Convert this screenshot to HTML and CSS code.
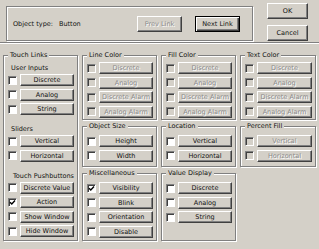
FILE: index.html
```html
<!DOCTYPE html>
<html lang="en">
<head>
    <meta charset="UTF-8">
    <title>Animation Links</title>
    <link rel="stylesheet" href="styles.css">
</head>
<body>
    <div class="dialog">
        <!-- Cabecera: tipo de objeto y navegación -->
        <div class="top">
            <div class="info">
                <span class="info-label">Object type:</span>
                <span class="info-value">Button</span>
                <button class="btn btn-link btn-prev" disabled>Prev Link</button>
                <button class="btn btn-link btn-default">Next Link</button>
            </div>
            <div class="actions">
                <button class="btn btn-action">OK</button>
                <button class="btn btn-action">Cancel</button>
            </div>
        </div>
        <div class="separator"></div>

        <div class="groups">
            <fieldset class="group group-touch">
                <legend>Touch Links</legend>
                <div class="sub">User Inputs</div>
                <div class="rows">
                    <div class="row"><span class="check"></span><button class="btn">Discrete</button></div>
                    <div class="row"><span class="check"></span><button class="btn">Analog</button></div>
                    <div class="row"><span class="check"></span><button class="btn">String</button></div>
                </div>
                <div class="sub">Sliders</div>
                <div class="rows">
                    <div class="row"><span class="check"></span><button class="btn">Vertical</button></div>
                    <div class="row"><span class="check"></span><button class="btn">Horizontal</button></div>
                </div>
                <div class="sub sub-center">Touch Pushbuttons</div>
                <div class="rows">
                    <div class="row"><span class="check"></span><button class="btn">Discrete Value</button></div>
                    <div class="row"><span class="check checked"><svg viewBox="0 0 7 7"><path d="M1 3.2 L2.8 5 L6 1.6"/></svg></span><button class="btn">Action</button></div>
                    <div class="row"><span class="check"></span><button class="btn">Show Window</button></div>
                    <div class="row"><span class="check"></span><button class="btn">Hide Window</button></div>
                </div>
            </fieldset>

            <fieldset class="group group-off">
                <legend>Line Color</legend>
                <div class="rows">
                    <div class="row"><span class="check"></span><button class="btn" disabled>Discrete</button></div>
                    <div class="row"><span class="check"></span><button class="btn" disabled>Analog</button></div>
                    <div class="row"><span class="check"></span><button class="btn" disabled>Discrete Alarm</button></div>
                    <div class="row"><span class="check"></span><button class="btn" disabled>Analog Alarm</button></div>
                </div>
            </fieldset>

            <fieldset class="group group-off">
                <legend>Fill Color</legend>
                <div class="rows">
                    <div class="row"><span class="check"></span><button class="btn" disabled>Discrete</button></div>
                    <div class="row"><span class="check"></span><button class="btn" disabled>Analog</button></div>
                    <div class="row"><span class="check"></span><button class="btn" disabled>Discrete Alarm</button></div>
                    <div class="row"><span class="check"></span><button class="btn" disabled>Analog Alarm</button></div>
                </div>
            </fieldset>

            <fieldset class="group group-off">
                <legend>Text Color</legend>
                <div class="rows">
                    <div class="row"><span class="check"></span><button class="btn" disabled>Discrete</button></div>
                    <div class="row"><span class="check"></span><button class="btn" disabled>Analog</button></div>
                    <div class="row"><span class="check"></span><button class="btn" disabled>Discrete Alarm</button></div>
                    <div class="row"><span class="check"></span><button class="btn" disabled>Analog Alarm</button></div>
                </div>
            </fieldset>

            <fieldset class="group group-mid">
                <legend>Object Size</legend>
                <div class="rows">
                    <div class="row"><span class="check"></span><button class="btn">Height</button></div>
                    <div class="row"><span class="check"></span><button class="btn">Width</button></div>
                </div>
            </fieldset>

            <fieldset class="group group-mid">
                <legend>Location</legend>
                <div class="rows">
                    <div class="row"><span class="check"></span><button class="btn">Vertical</button></div>
                    <div class="row"><span class="check"></span><button class="btn">Horizontal</button></div>
                </div>
            </fieldset>

            <fieldset class="group group-mid group-off">
                <legend>Percent Fill</legend>
                <div class="rows">
                    <div class="row"><span class="check"></span><button class="btn" disabled>Vertical</button></div>
                    <div class="row"><span class="check"></span><button class="btn" disabled>Horizontal</button></div>
                </div>
            </fieldset>

            <fieldset class="group group-low">
                <legend>Miscellaneous</legend>
                <div class="rows">
                    <div class="row"><span class="check checked"><svg viewBox="0 0 7 7"><path d="M1 3.2 L2.8 5 L6 1.6"/></svg></span><button class="btn">Visibility</button></div>
                    <div class="row"><span class="check"></span><button class="btn">Blink</button></div>
                    <div class="row"><span class="check"></span><button class="btn">Orientation</button></div>
                    <div class="row"><span class="check"></span><button class="btn">Disable</button></div>
                </div>
            </fieldset>

            <fieldset class="group group-low">
                <legend>Value Display</legend>
                <div class="rows">
                    <div class="row"><span class="check"></span><button class="btn">Discrete</button></div>
                    <div class="row"><span class="check"></span><button class="btn">Analog</button></div>
                    <div class="row"><span class="check"></span><button class="btn">String</button></div>
                </div>
            </fieldset>
        </div>
    </div>
</body>
</html>
```

FILE: styles.css
```css
body {
    margin: 0;
    background-color: #d4d0c8; /* Gris clásico de Windows */
    font-family: "DejaVu Sans", Verdana, sans-serif; /* Ancho parecido a MS Sans Serif */
    font-size: 6.5px;
    color: #111;
}
.dialog {
    width: 319px;
    height: 249px;
    overflow: hidden;
}

/* Cabecera */
.top {
    display: flex;
    align-items: flex-start;
    height: 42px;
}
.info {
    box-sizing: border-box;
    width: 247px;
    height: 35px;
    margin: 6px 0 0 6px;
    padding: 0 12px 0 6px;
    display: flex;
    align-items: center;
    border: 1px solid #808080;
    box-shadow: inset 1px 1px 0 #fff, 1px 1px 0 #fff; /* Marco grabado */
}
.info-value {
    margin-left: 6px;
}
.actions {
    display: flex;
    flex-direction: column;
    gap: 6px;
    margin: 3px 0 0 14px;
}
.separator {
    border-top: 1px solid #808080;
    border-bottom: 1px solid #fff;
}

/* Botones estilo Win32 */
.btn {
    font: inherit;
    color: #111;
    background-color: #d4d0c8;
    box-sizing: border-box;
    height: 12px;
    line-height: 10px;
    margin: 0;
    padding: 0;
    border: 1px solid;
    border-color: #fff #404040 #404040 #fff;
    box-shadow: inset -1px -1px 0 #808080;
    white-space: nowrap;
    overflow: hidden;
}
.btn:disabled {
    color: #8a8a8a;
    text-shadow: 1px 1px 0 #fff;
}
.btn-link {
    width: 45px;
    height: 16px;
}
.btn-prev {
    margin-left: auto;
}
.btn-default {
    margin-left: 13px;
    border-color: #000;
    box-shadow: inset 1px 1px 0 #fff, inset -1px -1px 0 #404040, inset -2px -2px 0 #808080;
}
.btn-action {
    width: 41px;
    height: 16px;
}

/* Grupos */
.groups {
    display: grid;
    grid-template-columns: 75px 75px 75px 76px;
    grid-template-rows: 69px 45px 72px;
    column-gap: 4px;
    row-gap: 2px;
    margin: 7px 0 0 3px;
}
.group {
    margin: 0;
    min-width: 0;
    padding: 2px 3px 0 4px;
    border: 1px solid #808080;
    box-shadow: inset 1px 1px 0 #fff, 1px 1px 0 #fff;
}
.group legend {
    padding: 0 2px;
    line-height: 9px;
    background-color: #d4d0c8;
}
.group-touch {
    grid-row: 1 / 4;
    padding-top: 3px;
}
.group-mid {
    padding-top: 4px;
}
.group-low {
    padding-top: 4px;
}
.sub {
    line-height: 11px;
    padding-left: 3px;
}
.sub-center {
    padding-left: 5px;
}
.rows + .sub {
    margin-top: 9px;
}
.rows {
    display: flex;
    flex-direction: column;
    gap: 2.5px;
}
.row {
    display: flex;
    align-items: center;
    gap: 3px;
}
.row .btn {
    flex: 1;
    min-width: 0;
}

/* Casillas */
.check {
    box-sizing: border-box;
    width: 9px;
    height: 9px;
    flex: none;
    display: flex;
    align-items: center;
    justify-content: center;
    background-color: #fff;
    border: 1px solid;
    border-color: #808080 #fff #fff #808080;
    box-shadow: inset 1px 1px 0 #404040;
}
.group-off .check {
    background-color: #d4d0c8;
}
.check svg {
    width: 7px;
    height: 7px;
}
.check path {
    fill: none;
    stroke: #000;
    stroke-width: 1.4;
}
```
